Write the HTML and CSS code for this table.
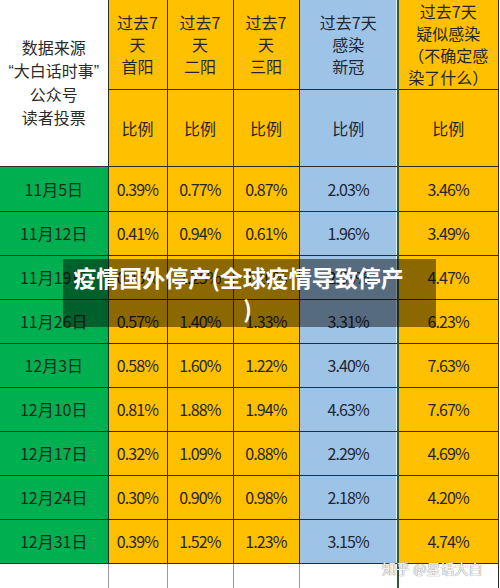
FILE: index.html
```html
<!DOCTYPE html>
<html lang="zh-CN">
<head>
<meta charset="utf-8">
<title>疫情国外停产</title>
<link rel="stylesheet" href="styles.css">
</head>
<body>
<div class="page">
  <table class="sheet">
    <colgroup>
      <col class="c-src"><col class="c-a"><col class="c-b"><col class="c-b"><col class="c-blue"><col class="c-sus">
    </colgroup>
    <thead>
      <tr class="h1">
        <th class="src" rowspan="2">数据来源<br><span class="q">“</span>大白话时事<span class="q">”</span><br>公众号<br>读者投票</th>
        <th class="y">过去7<br>天<br>首阳</th>
        <th class="y">过去7<br>天<br>二阳</th>
        <th class="y">过去7<br>天<br>三阳</th>
        <th class="b">过去7天<br>感染<br>新冠</th>
        <th class="y s">过去7天<br>疑似感染<br>（不确定感<br>染了什么）</th>
      </tr>
      <tr class="h2">
        <th class="y">比例</th>
        <th class="y">比例</th>
        <th class="y">比例</th>
        <th class="b">比例</th>
        <th class="y s">比例</th>
      </tr>
    </thead>
    <tbody>
      <tr class="first"><td class="d">11月5日</td><td class="y n">0.39%</td><td class="y n">0.77%</td><td class="y n">0.87%</td><td class="b n">2.03%</td><td class="y s n">3.46%</td></tr>
      <tr><td class="d">11月12日</td><td class="y n">0.41%</td><td class="y n">0.94%</td><td class="y n">0.61%</td><td class="b n">1.96%</td><td class="y s n">3.49%</td></tr>
      <tr><td class="d">11月19日</td><td class="y n">0.45%</td><td class="y n">1.25%</td><td class="y n">1.10%</td><td class="b n">2.56%</td><td class="y s n">4.47%</td></tr>
      <tr><td class="d">11月26日</td><td class="y n">0.57%</td><td class="y n">1.40%</td><td class="y n">1.33%</td><td class="b n">3.31%</td><td class="y s n">6.23%</td></tr>
      <tr><td class="d">12月3日</td><td class="y n">0.58%</td><td class="y n">1.60%</td><td class="y n">1.22%</td><td class="b n">3.40%</td><td class="y s n">7.63%</td></tr>
      <tr><td class="d">12月10日</td><td class="y n">0.81%</td><td class="y n">1.88%</td><td class="y n">1.94%</td><td class="b n">4.63%</td><td class="y s n">7.67%</td></tr>
      <tr><td class="d">12月17日</td><td class="y n">0.32%</td><td class="y n">1.09%</td><td class="y n">0.88%</td><td class="b n">2.29%</td><td class="y s n">4.69%</td></tr>
      <tr><td class="d">12月24日</td><td class="y n">0.30%</td><td class="y n">0.90%</td><td class="y n">0.98%</td><td class="b n">2.18%</td><td class="y s n">4.20%</td></tr>
      <tr><td class="d">12月31日</td><td class="y n">0.39%</td><td class="y n">1.52%</td><td class="y n">1.23%</td><td class="b n">3.15%</td><td class="y s n">4.74%</td></tr>
      <tr class="blank"><td></td><td></td><td></td><td></td><td></td><td class="s"></td></tr>
    </tbody>
  </table>
  <div class="overlay"><span class="line1">疫情国外停产(全球疫情导致停产</span><span class="line2">)</span></div>
  <div class="watermark">知乎 @星话大白</div>
</div>
</body>
</html>
```

FILE: styles.css
```css
html, body {
  margin: 0;
  padding: 0;
  background: #ffffff;
}

.page {
  position: relative;
  width: 500px;
  height: 588px;
  overflow: hidden;
  background: #ffffff;
}

.sheet {
  table-layout: fixed;
  border-collapse: collapse;
  width: 498px;
  font-family: "Noto Sans CJK SC", "Noto Sans", sans-serif;
  font-size: 16px;
  color: #262626;
}

.c-src { width: 108px; }
.c-a { width: 59px; }
.c-b { width: 66px; }
.c-blue { width: 99px; }
.c-sus { width: 100px; }

.sheet th,
.sheet td {
  border: 1px solid #2c2c2c;
  padding: 0;
  text-align: center;
  vertical-align: middle;
  font-weight: 400;
  line-height: 22px;
}

.sheet tr:first-child th { border-top: none; }
.sheet th:first-child,
.sheet td:first-child { border-left: none; }

.h1 { height: 89px; }
.h2 { height: 77px; }
.sheet tbody tr { height: 44px; }
.sheet tbody tr.first { height: 45px; }
.sheet tbody tr.blank { height: 25px; }

.src {
  background: #ffffff;
  line-height: 23px !important;
  color: #2a2a2a;
}
.q { font-family: "Liberation Sans", sans-serif; }

.y { background: #ffc000; }
.b { background: #9dc3e6; color: #1f2733; }
.d { background: #00b050; color: #1c2a1c; }

.s { border-left: 2px solid #2e5a34 !important; }
.b { box-shadow: inset -1px 0 0 #e6eef2; }

.n { letter-spacing: -0.9px; }

.blank td {
  background: #ffffff;
  border-bottom: none;
  border-color: #9a9a9a;
}
.blank td.s { border-left: 2px solid #2e5a34 !important; }
.blank td:last-child { border-right: 1px solid #2c2c2c; }

.overlay {
  position: absolute;
  left: 63px;
  top: 259px;
  width: 373px;
  height: 68px;
  box-sizing: border-box;
  padding-top: 3px;
  background: rgba(0, 0, 0, 0.45);
  color: #ffffff;
  font-family: "Noto Sans CJK SC", "Noto Sans", sans-serif;
  font-weight: 700;
  font-size: 23px;
  line-height: 31px;
  text-align: center;
  white-space: nowrap;
}

.line1 {
  display: block;
  margin-right: 22px;
}

.line2 {
  display: block;
  margin-left: -4px;
}

.watermark {
  position: absolute;
  left: 382px;
  top: 558px;
  font-family: "Noto Sans CJK SC", "Noto Sans", sans-serif;
  font-size: 14px;
  line-height: 20px;
  color: rgba(255, 255, 255, 0.92);
  text-shadow: 0 0 1px #8a8a8a, 0 0 1px #8a8a8a;
  white-space: nowrap;
}
```
